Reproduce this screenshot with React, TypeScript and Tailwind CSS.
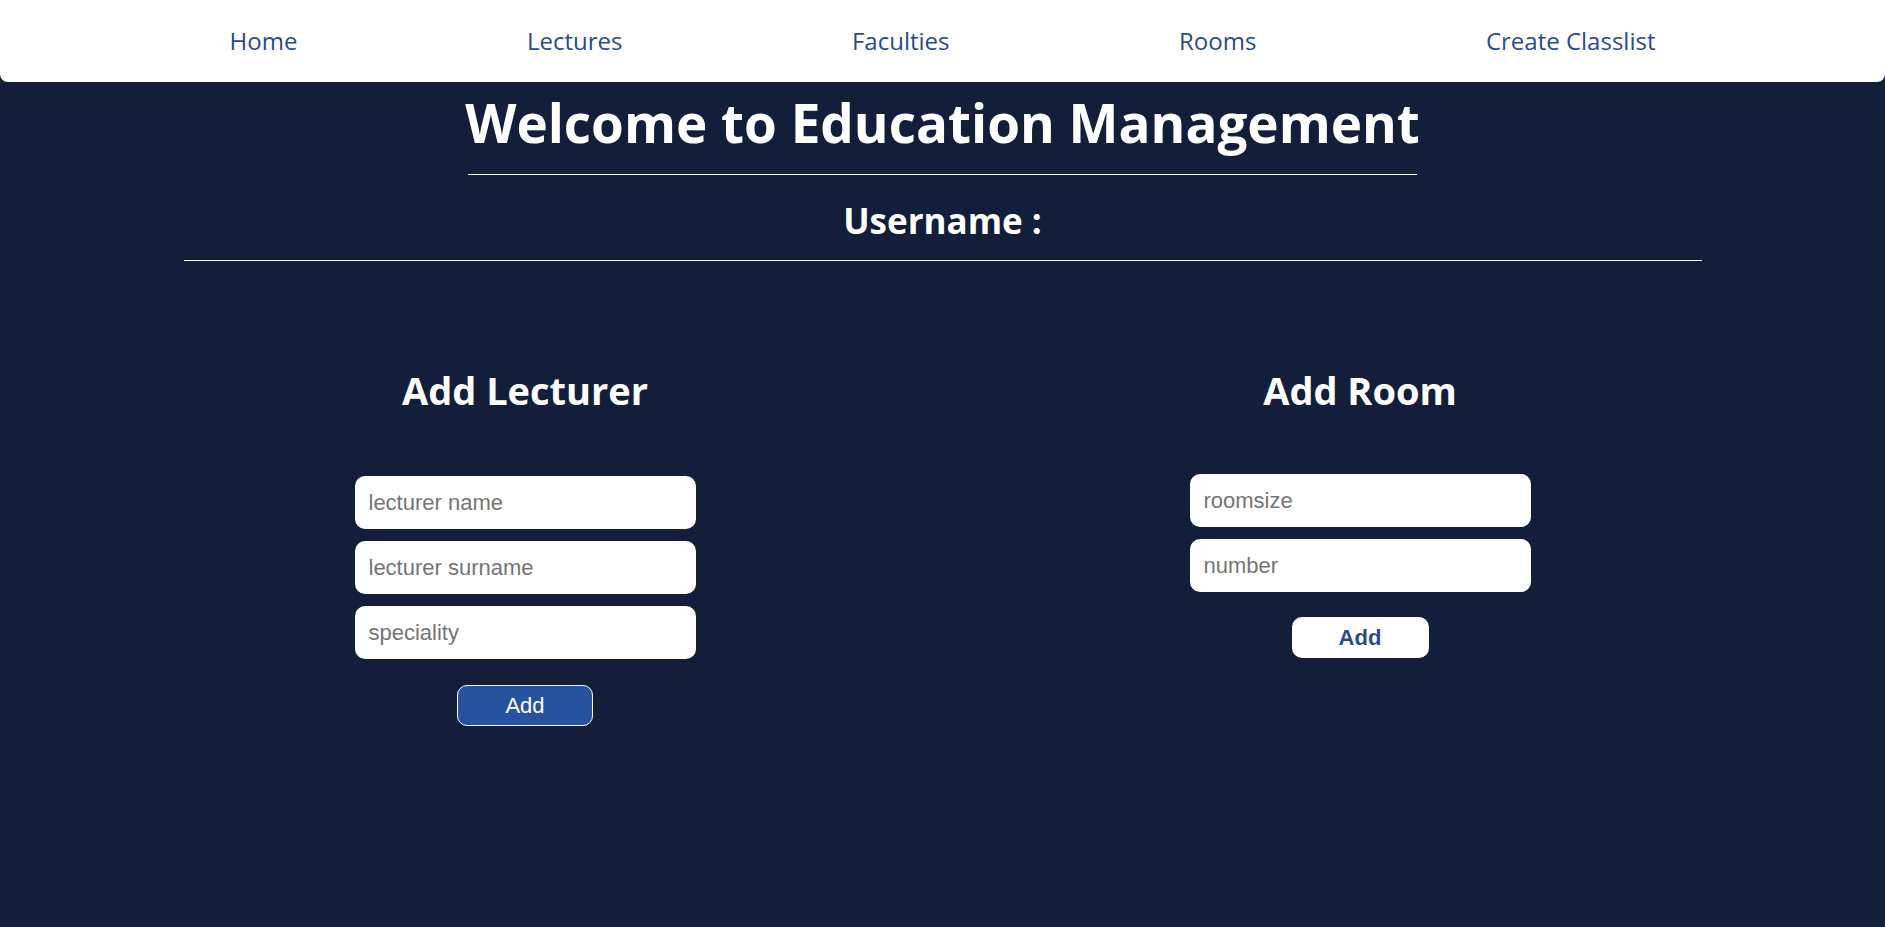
import { useState } from "react";

// Education management dashboard: top nav, welcome header and two add forms.

const NAV = ["Home", "Lectures", "Faculties", "Rooms", "Create Classlist"];

const HEAD_FONT = { fontFamily: '"Open Sans", "Noto Sans", sans-serif' };

function Field({ placeholder }: { placeholder: string }) {
  const [value, setValue] = useState("");
  return (
    <input
      type="text"
      value={value}
      placeholder={placeholder}
      onChange={(e) => setValue(e.target.value)}
      className="block h-[53px] w-[341px] rounded-[10px] bg-white px-[14px] font-['Liberation_Sans',Arial,sans-serif] text-[22px] text-gray-900 outline-none placeholder:text-[#757575]"
    />
  );
}

export default function App() {
  return (
    <div className="min-h-[927px] bg-[#131e3b]" style={HEAD_FONT}>
      <nav className="flex h-[82px] items-center justify-evenly rounded-b-lg bg-white">
        {NAV.map((item) => (
          <a key={item} href="#" className="text-[24px] text-[#2a4b8c]">
            {item}
          </a>
        ))}
      </nav>

      <header className="flex flex-col items-center text-white">
        <h1 className="mt-[10px] text-[53px] font-bold leading-[62px]">
          Welcome to Education Management
        </h1>
        <div className="mt-[20px] w-[949px] border-t border-white" />
        <h2 className="mt-[25px] text-[35px] font-bold leading-[42px]">Username :</h2>
        <div className="mt-[18px] w-[1518px] border-t border-white" />
      </header>

      <main className="mx-auto grid w-[1670px] grid-cols-2">
        <section className="flex flex-col items-center">
          <h3 className="mt-[106px] text-[38px] font-bold leading-[46px] text-white">Add Lecturer</h3>
          <div className="mt-[63px] flex flex-col gap-[12px]">
            <Field placeholder="lecturer name" />
            <Field placeholder="lecturer surname" />
            <Field placeholder="speciality" />
          </div>
          <button
            type="button"
            className="mt-[26px] h-[41px] w-[136px] rounded-[10px] border border-white bg-[#2653a0] font-['Liberation_Sans',Arial,sans-serif] text-[22px] text-white"
          >
            Add
          </button>
        </section>

        <section className="flex flex-col items-center">
          <h3 className="mt-[106px] text-[38px] font-bold leading-[46px] text-white">Add Room</h3>
          <div className="mt-[61px] flex flex-col gap-[12px]">
            <Field placeholder="roomsize" />
            <Field placeholder="number" />
          </div>
          <button
            type="button"
            className="mt-[25px] h-[41px] w-[137px] rounded-[10px] bg-white font-['Liberation_Sans',Arial,sans-serif] text-[22px] font-bold text-[#2a4b8c]"
          >
            Add
          </button>
        </section>
      </main>
    </div>
  );
}
